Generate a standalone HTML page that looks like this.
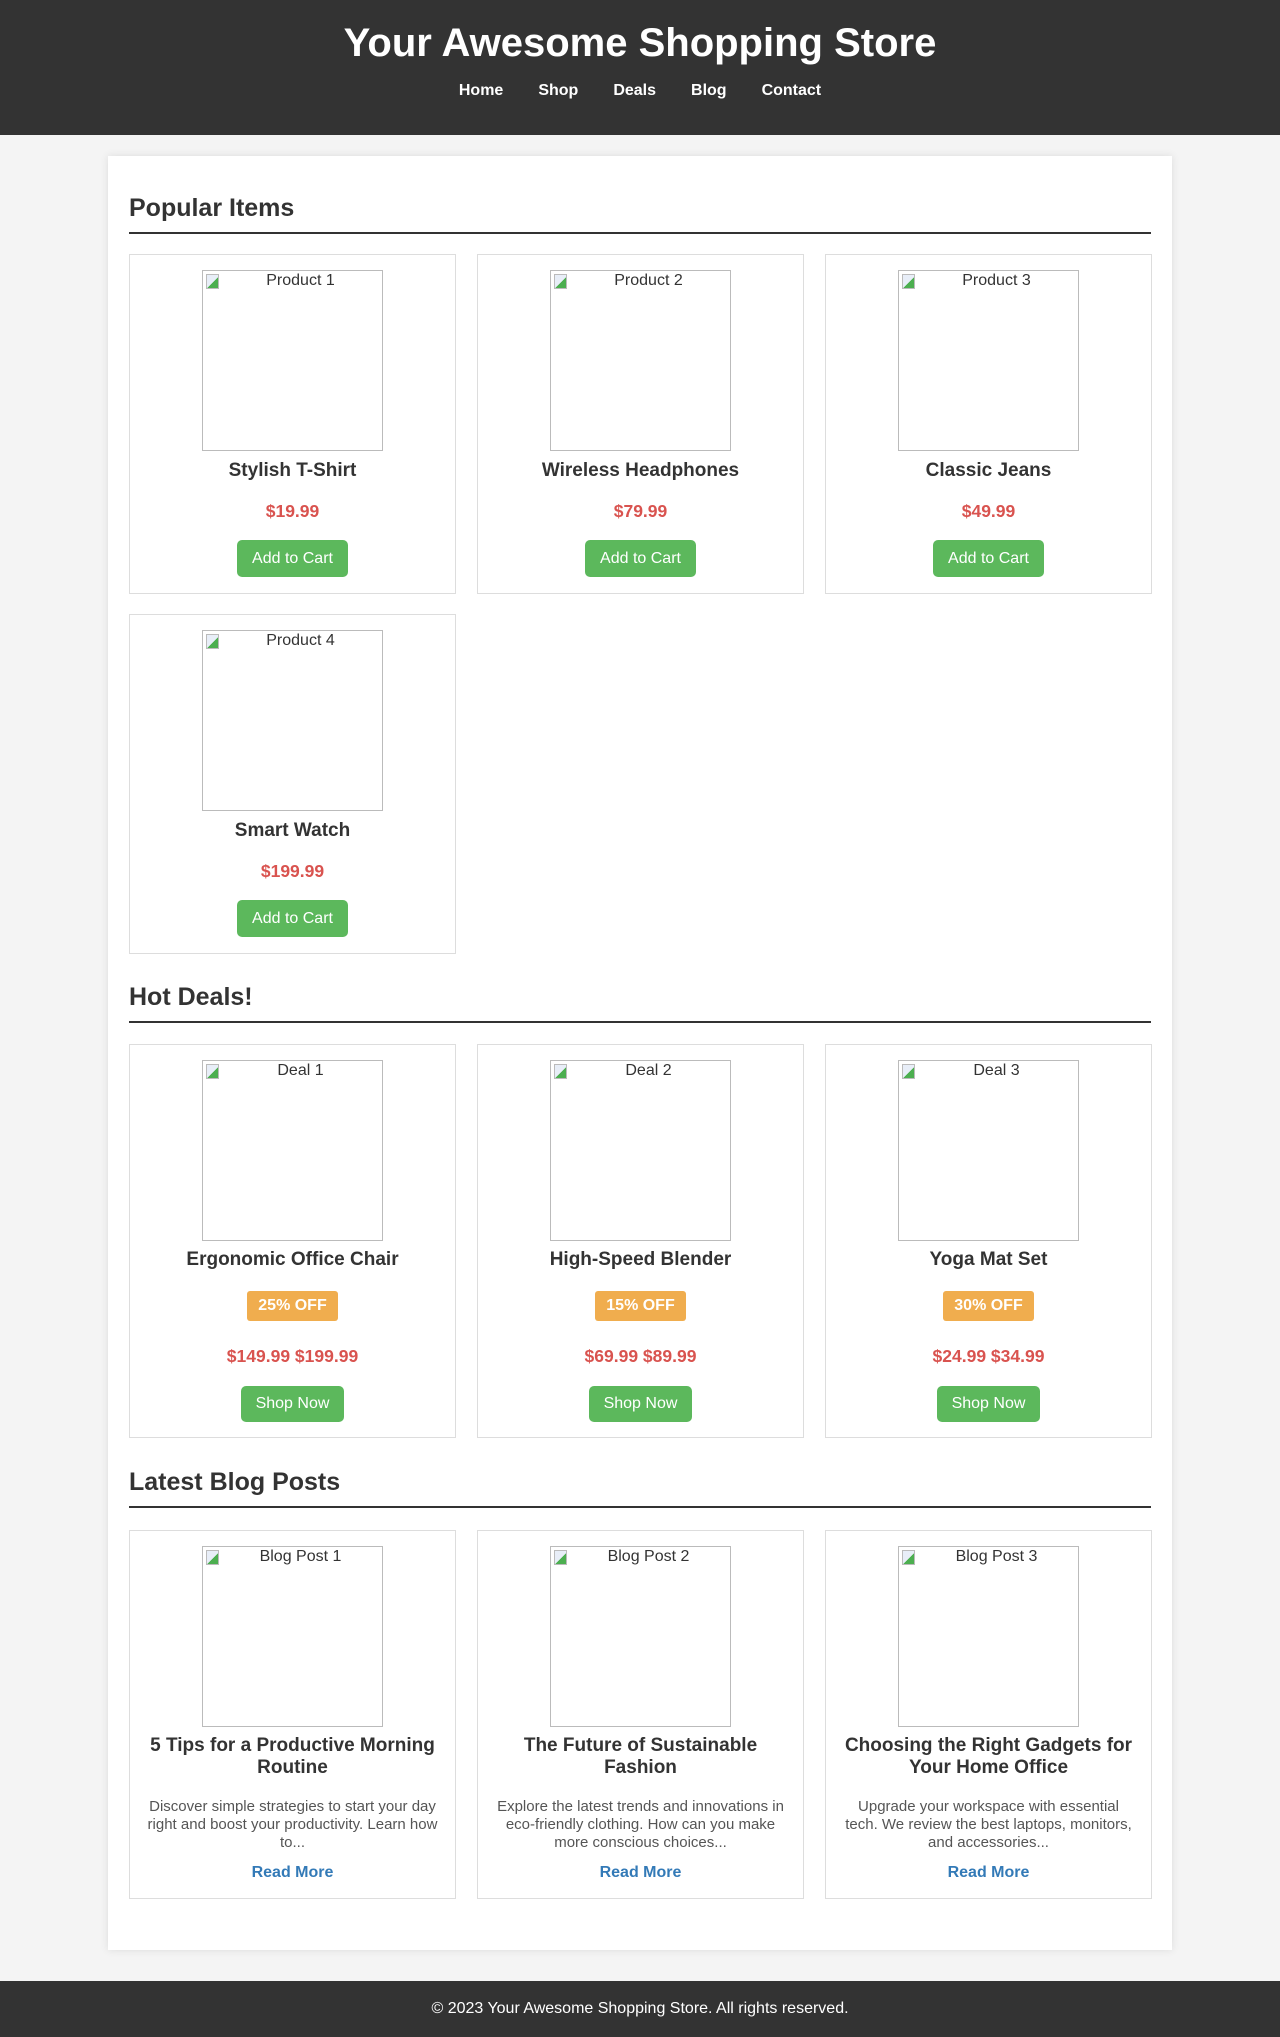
<!DOCTYPE html>
<html><head><meta charset="utf-8"><style>
*{box-sizing:border-box;margin:0;padding:0}
body{width:1280px;height:2037px;background:#f4f4f4;font-family:"Liberation Sans",Arial,sans-serif;color:#333;overflow:hidden}
header{height:135px;background:#333;color:#fff;text-align:center;padding-top:18px}
header h1{font-size:40px;line-height:50px;font-weight:bold}
nav{margin-top:13px;font-size:16px;font-weight:bold;line-height:20px}
nav span{margin:0 17.5px}
main{position:relative;margin:21px 0 0 108px;width:1064px;background:#fff;box-shadow:0 0 8px rgba(0,0,0,.1);padding:1px 21px 50px;height:1794px}
h2{font-size:25px;line-height:32px;padding-bottom:8px;border-bottom:2px solid #333;height:42px}
.grid{display:grid;grid-template-columns:327px 327px 327px;column-gap:21px;row-gap:20px}
.card{border:1px solid #ddd;text-align:center;padding:15px 15px 0}
.img{width:181px;height:181px;border:1px solid #bbb;margin:0 auto;font-size:16px;line-height:20px;position:relative;color:#333;padding-left:16px}
.img:before{content:"";position:absolute;left:3px;top:3px;width:11px;height:13px;background:linear-gradient(135deg,#e8eef8 55%,#4caf50 55%);border:1px solid #bbb}
h3{font-size:19px;line-height:24px;font-weight:bold}
.price{color:#d9534f;font-weight:bold;font-size:17.5px;line-height:20px}
.btn{display:inline-block;background:#5cb85c;color:#fff;font-size:16px;border-radius:5px;height:37px;line-height:37px;padding:0 15px}
.badge{display:inline-block;background:#f0ad4e;color:#fff;font-weight:bold;font-size:16px;height:30px;line-height:30px;padding:0 11px;border-radius:3px}
.desc{color:#555;font-size:15px;line-height:18px}
.more{color:#337ab7;font-weight:bold;font-size:16px;line-height:20px}
footer{position:absolute;top:1981px;left:0;width:1280px;height:56px;background:#333;color:#fff;text-align:center;font-size:16px;line-height:56px}
</style></head><body>
<header><h1>Your Awesome Shopping Store</h1><nav><span>Home</span><span>Shop</span><span>Deals</span><span>Blog</span><span>Contact</span></nav></header>
<main>
<h2 style="margin-top:35px">Popular Items</h2>
<div class="grid" style="margin-top:20px">
<div class="card" style="height:340px"><div class="img">Product 1</div><h3 style="margin-top:8px">Stylish T-Shirt</h3><div class="price" style="margin-top:18px">$19.99</div><div class="btn" style="margin-top:19px">Add to Cart</div></div>
<div class="card" style="height:340px"><div class="img">Product 2</div><h3 style="margin-top:8px">Wireless Headphones</h3><div class="price" style="margin-top:18px">$79.99</div><div class="btn" style="margin-top:19px">Add to Cart</div></div>
<div class="card" style="height:340px"><div class="img">Product 3</div><h3 style="margin-top:8px">Classic Jeans</h3><div class="price" style="margin-top:18px">$49.99</div><div class="btn" style="margin-top:19px">Add to Cart</div></div>
<div class="card" style="height:340px"><div class="img">Product 4</div><h3 style="margin-top:8px">Smart Watch</h3><div class="price" style="margin-top:18px">$199.99</div><div class="btn" style="margin-top:19px">Add to Cart</div></div>
</div>
<h2 style="margin-top:27px">Hot Deals!</h2>
<div class="grid" style="margin-top:21px">
<div class="card" style="height:394px"><div class="img">Deal 1</div><h3 style="margin-top:7px">Ergonomic Office Chair</h3><div style="margin-top:19px;height:30px"><span class="badge">25% OFF</span></div><div class="price" style="margin-top:25px">$149.99 $199.99</div><div class="btn" style="margin-top:20px;height:36px;line-height:36px">Shop Now</div></div>
<div class="card" style="height:394px"><div class="img">Deal 2</div><h3 style="margin-top:7px">High-Speed Blender</h3><div style="margin-top:19px;height:30px"><span class="badge">15% OFF</span></div><div class="price" style="margin-top:25px">$69.99 $89.99</div><div class="btn" style="margin-top:20px;height:36px;line-height:36px">Shop Now</div></div>
<div class="card" style="height:394px"><div class="img">Deal 3</div><h3 style="margin-top:7px">Yoga Mat Set</h3><div style="margin-top:19px;height:30px"><span class="badge">30% OFF</span></div><div class="price" style="margin-top:25px">$24.99 $34.99</div><div class="btn" style="margin-top:20px;height:36px;line-height:36px">Shop Now</div></div>
</div>
<h2 style="margin-top:28px">Latest Blog Posts</h2>
<div class="grid" style="margin-top:22px">
<div class="card" style="height:369px"><div class="img">Blog Post 1</div><h3 style="margin-top:8px;line-height:22px">5 Tips for a Productive Morning Routine</h3><p class="desc" style="margin-top:19px">Discover simple strategies to start your day right and boost your productivity. Learn how to...</p><div class="more" style="margin-top:11px">Read More</div></div>
<div class="card" style="height:369px"><div class="img">Blog Post 2</div><h3 style="margin-top:8px;line-height:22px">The Future of Sustainable Fashion</h3><p class="desc" style="margin-top:19px">Explore the latest trends and innovations in eco-friendly clothing. How can you make more conscious choices...</p><div class="more" style="margin-top:11px">Read More</div></div>
<div class="card" style="height:369px"><div class="img">Blog Post 3</div><h3 style="margin-top:8px;line-height:22px">Choosing the Right Gadgets for Your Home Office</h3><p class="desc" style="margin-top:19px">Upgrade your workspace with essential tech. We review the best laptops, monitors, and accessories...</p><div class="more" style="margin-top:11px">Read More</div></div>
</div>
</main>
<footer>© 2023 Your Awesome Shopping Store. All rights reserved.</footer>
</body></html>
